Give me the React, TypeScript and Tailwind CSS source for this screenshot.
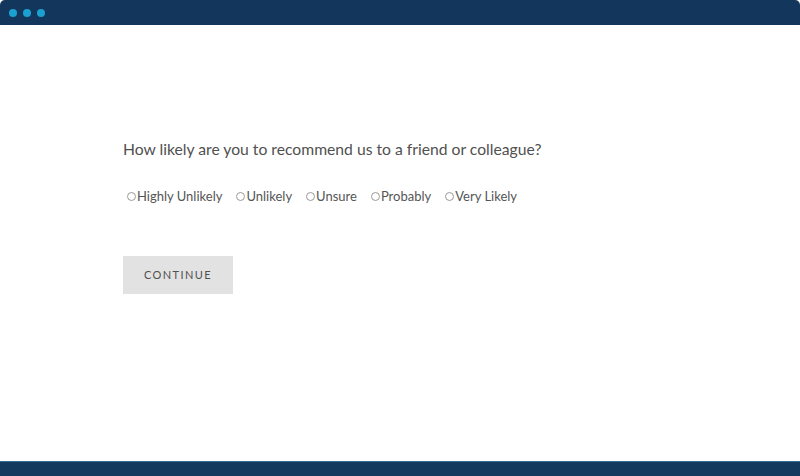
const options = ["Highly Unlikely", "Unlikely", "Unsure", "Probably", "Very Likely"];

export default function App() {
  return (
    <div className="flex h-[476px] w-[800px] flex-col bg-white font-['Lato',sans-serif] text-[#555]">
      <div className="flex h-[25px] items-center gap-[6px] rounded-t-[5px] bg-[#13375c] px-[9px]">
        <span className="h-[8px] w-[8px] rounded-full bg-[#1ba1d1]" />
        <span className="h-[8px] w-[8px] rounded-full bg-[#1ba1d1]" />
        <span className="h-[8px] w-[8px] rounded-full bg-[#1ba1d1]" />
      </div>

      <div className="flex-1 pl-[123px] pt-[113px]">
        <h1 className="text-[15.7px] leading-[22px] text-[#505050]">
          How likely are you to recommend us to a friend or colleague?
        </h1>
        <div className="mt-[27px] flex gap-[14px] pl-[4px] text-[13px] leading-[18px]">
          {options.map((o) => (
            <label key={o} className="flex items-center">
              <span className="h-[9px] w-[9px] rounded-full border border-[#9a9a9a] bg-white" />
              <span className="ml-[1px]">{o}</span>
            </label>
          ))}
        </div>
        <button className="mt-[51px] h-[38px] w-[110px] bg-[#e2e2e2] text-[11px] tracking-[1.4px] text-[#505050]">
          CONTINUE
        </button>
      </div>

      <div className="h-[15px] border-t border-[#2f7094] bg-[#123a5e]" />
    </div>
  );
}
